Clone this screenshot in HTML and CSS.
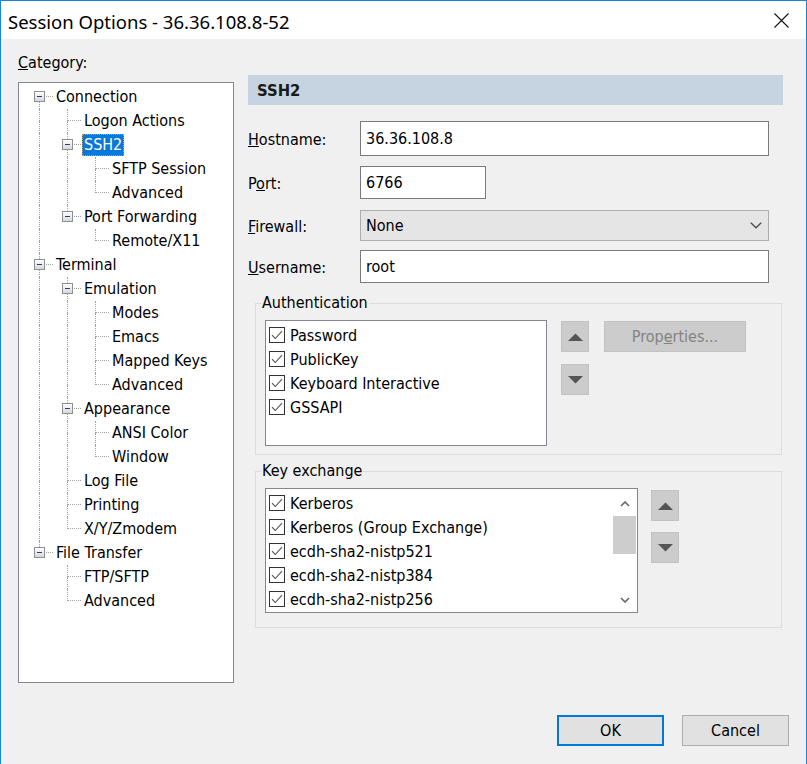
FILE: index.html
```html
<!DOCTYPE html>
<html lang="en">
<head>
<meta charset="utf-8">
<title>Session Options</title>
<link rel="stylesheet" href="styles.css">
</head>
<body>
<div class="window">
  <div class="titlebar">
    <span class="title">Session Options - 36.36.108.8-52</span>
    <svg class="close" width="15" height="15" viewBox="0 0 15 15"><path d="M0.5 0.5L14.5 14.5M14.5 0.5L0.5 14.5" stroke="#111" stroke-width="1.1" fill="none"/></svg>
  </div>
  <div class="main">
    <div class="left">
      <div class="cat-label"><u>C</u>ategory:</div>
      <div class="tree">
        <div class="row"><span class="cell first"><span class="ln"></span><span class="box"></span></span><span class="lbl">Connection</span></div>
        <div class="row"><span class="cell pipe"><span class="ln"></span></span><span class="cell tee"><span class="ln"></span></span><span class="lbl">Logon Actions</span></div>
        <div class="row"><span class="cell pipe"><span class="ln"></span></span><span class="cell tee"><span class="ln"></span><span class="box"></span></span><span class="lbl sel">SSH2</span></div>
        <div class="row"><span class="cell pipe"><span class="ln"></span></span><span class="cell pipe"><span class="ln"></span></span><span class="cell tee"><span class="ln"></span></span><span class="lbl">SFTP Session</span></div>
        <div class="row"><span class="cell pipe"><span class="ln"></span></span><span class="cell pipe"><span class="ln"></span></span><span class="cell elbow"><span class="ln"></span></span><span class="lbl">Advanced</span></div>
        <div class="row"><span class="cell pipe"><span class="ln"></span></span><span class="cell elbow"><span class="ln"></span><span class="box"></span></span><span class="lbl">Port Forwarding</span></div>
        <div class="row"><span class="cell pipe"><span class="ln"></span></span><span class="cell blank"></span><span class="cell elbow"><span class="ln"></span></span><span class="lbl">Remote/X11</span></div>
        <div class="row"><span class="cell tee"><span class="ln"></span><span class="box"></span></span><span class="lbl">Terminal</span></div>
        <div class="row"><span class="cell pipe"><span class="ln"></span></span><span class="cell tee"><span class="ln"></span><span class="box"></span></span><span class="lbl">Emulation</span></div>
        <div class="row"><span class="cell pipe"><span class="ln"></span></span><span class="cell pipe"><span class="ln"></span></span><span class="cell tee"><span class="ln"></span></span><span class="lbl">Modes</span></div>
        <div class="row"><span class="cell pipe"><span class="ln"></span></span><span class="cell pipe"><span class="ln"></span></span><span class="cell tee"><span class="ln"></span></span><span class="lbl">Emacs</span></div>
        <div class="row"><span class="cell pipe"><span class="ln"></span></span><span class="cell pipe"><span class="ln"></span></span><span class="cell tee"><span class="ln"></span></span><span class="lbl">Mapped Keys</span></div>
        <div class="row"><span class="cell pipe"><span class="ln"></span></span><span class="cell pipe"><span class="ln"></span></span><span class="cell elbow"><span class="ln"></span></span><span class="lbl">Advanced</span></div>
        <div class="row"><span class="cell pipe"><span class="ln"></span></span><span class="cell tee"><span class="ln"></span><span class="box"></span></span><span class="lbl">Appearance</span></div>
        <div class="row"><span class="cell pipe"><span class="ln"></span></span><span class="cell pipe"><span class="ln"></span></span><span class="cell tee"><span class="ln"></span></span><span class="lbl">ANSI Color</span></div>
        <div class="row"><span class="cell pipe"><span class="ln"></span></span><span class="cell pipe"><span class="ln"></span></span><span class="cell elbow"><span class="ln"></span></span><span class="lbl">Window</span></div>
        <div class="row"><span class="cell pipe"><span class="ln"></span></span><span class="cell tee"><span class="ln"></span></span><span class="lbl">Log File</span></div>
        <div class="row"><span class="cell pipe"><span class="ln"></span></span><span class="cell tee"><span class="ln"></span></span><span class="lbl">Printing</span></div>
        <div class="row"><span class="cell pipe"><span class="ln"></span></span><span class="cell elbow"><span class="ln"></span></span><span class="lbl">X/Y/Zmodem</span></div>
        <div class="row"><span class="cell elbow"><span class="ln"></span><span class="box"></span></span><span class="lbl">File Transfer</span></div>
        <div class="row"><span class="cell blank"></span><span class="cell tee"><span class="ln"></span></span><span class="lbl">FTP/SFTP</span></div>
        <div class="row"><span class="cell blank"></span><span class="cell elbow"><span class="ln"></span></span><span class="lbl">Advanced</span></div>
      </div>
    </div>

    <div class="right">
      <div class="header">SSH2</div>
      <div class="frow host"><label><u>H</u>ostname:</label><div class="field">36.36.108.8</div></div>
      <div class="frow port"><label>P<u>o</u>rt:</label><div class="field">6766</div></div>
      <div class="frow fw"><label><u>F</u>irewall:</label><div class="field select"><span>None</span><svg width="12" height="7" viewBox="0 0 12 7"><path d="M0.8 0.8L6 5.8L11.2 0.8" stroke="#505050" stroke-width="1.4" fill="none"/></svg></div></div>
      <div class="frow user"><label><u>U</u>sername:</label><div class="field">root</div></div>

      <fieldset class="group auth">
        <legend>Authentication</legend>
        <div class="gbody">
          <div class="list">
            <div class="item"><svg class="cb" width="16" height="16" viewBox="0 0 16 16"><rect x="0.5" y="0.5" width="15" height="15" fill="#fff" stroke="#333"/><path d="M3 8.2L6.3 11.5L13 4.2" stroke="#555" stroke-width="1.1" fill="none"/></svg><span>Password</span></div>
            <div class="item"><svg class="cb" width="16" height="16" viewBox="0 0 16 16"><rect x="0.5" y="0.5" width="15" height="15" fill="#fff" stroke="#333"/><path d="M3 8.2L6.3 11.5L13 4.2" stroke="#555" stroke-width="1.1" fill="none"/></svg><span>PublicKey</span></div>
            <div class="item"><svg class="cb" width="16" height="16" viewBox="0 0 16 16"><rect x="0.5" y="0.5" width="15" height="15" fill="#fff" stroke="#333"/><path d="M3 8.2L6.3 11.5L13 4.2" stroke="#555" stroke-width="1.1" fill="none"/></svg><span>Keyboard Interactive</span></div>
            <div class="item"><svg class="cb" width="16" height="16" viewBox="0 0 16 16"><rect x="0.5" y="0.5" width="15" height="15" fill="#fff" stroke="#333"/><path d="M3 8.2L6.3 11.5L13 4.2" stroke="#555" stroke-width="1.1" fill="none"/></svg><span>GSSAPI</span></div>
          </div>
          <div class="arrows">
            <div class="abtn"><svg width="15" height="8" viewBox="0 0 15 8"><path d="M0 8L7.5 0.5L15 8Z" fill="#555"/></svg></div>
            <div class="abtn"><svg width="15" height="8" viewBox="0 0 15 8"><path d="M0 0L15 0L7.5 7.5Z" fill="#555"/></svg></div>
          </div>
          <div class="props">Prop<u>e</u>rties...</div>
        </div>
      </fieldset>

      <fieldset class="group kex">
        <legend>Key exchange</legend>
        <div class="gbody">
          <div class="list">
            <div class="items">
              <div class="item"><svg class="cb" width="16" height="16" viewBox="0 0 16 16"><rect x="0.5" y="0.5" width="15" height="15" fill="#fff" stroke="#333"/><path d="M3 8.2L6.3 11.5L13 4.2" stroke="#555" stroke-width="1.1" fill="none"/></svg><span>Kerberos</span></div>
              <div class="item"><svg class="cb" width="16" height="16" viewBox="0 0 16 16"><rect x="0.5" y="0.5" width="15" height="15" fill="#fff" stroke="#333"/><path d="M3 8.2L6.3 11.5L13 4.2" stroke="#555" stroke-width="1.1" fill="none"/></svg><span>Kerberos (Group Exchange)</span></div>
              <div class="item"><svg class="cb" width="16" height="16" viewBox="0 0 16 16"><rect x="0.5" y="0.5" width="15" height="15" fill="#fff" stroke="#333"/><path d="M3 8.2L6.3 11.5L13 4.2" stroke="#555" stroke-width="1.1" fill="none"/></svg><span>ecdh-sha2-nistp521</span></div>
              <div class="item"><svg class="cb" width="16" height="16" viewBox="0 0 16 16"><rect x="0.5" y="0.5" width="15" height="15" fill="#fff" stroke="#333"/><path d="M3 8.2L6.3 11.5L13 4.2" stroke="#555" stroke-width="1.1" fill="none"/></svg><span>ecdh-sha2-nistp384</span></div>
              <div class="item"><svg class="cb" width="16" height="16" viewBox="0 0 16 16"><rect x="0.5" y="0.5" width="15" height="15" fill="#fff" stroke="#333"/><path d="M3 8.2L6.3 11.5L13 4.2" stroke="#555" stroke-width="1.1" fill="none"/></svg><span>ecdh-sha2-nistp256</span></div>
            </div>
            <div class="scroll">
              <div class="sarrow"><svg width="10" height="6" viewBox="0 0 10 6"><path d="M1 5L5 1L9 5" stroke="#606060" stroke-width="1.5" fill="none"/></svg></div>
              <div class="thumb"></div>
              <div class="track"></div>
              <div class="sarrow"><svg width="10" height="6" viewBox="0 0 10 6"><path d="M1 1L5 5L9 1" stroke="#606060" stroke-width="1.5" fill="none"/></svg></div>
            </div>
          </div>
          <div class="arrows">
            <div class="abtn"><svg width="15" height="8" viewBox="0 0 15 8"><path d="M0 8L7.5 0.5L15 8Z" fill="#555"/></svg></div>
            <div class="abtn"><svg width="15" height="8" viewBox="0 0 15 8"><path d="M0 0L15 0L7.5 7.5Z" fill="#555"/></svg></div>
          </div>
        </div>
      </fieldset>
    </div>
  </div>
  <div class="footer">
    <button class="btn ok">OK</button>
    <button class="btn">Cancel</button>
  </div>
</div>
</body>
</html>
```

FILE: styles.css
```css
html, body {
  margin: 0;
  padding: 0;
  background: #f0f0f0;
}
body {
  font-family: "DejaVu Sans Condensed", "DejaVu Sans", sans-serif;
  font-stretch: condensed;
  font-size: 16px;
  color: #000;
}
.window {
  width: 807px;
  height: 764px;
  box-sizing: border-box;
  border: 1px solid #1883d7;
  border-bottom: none;
  background: #f0f0f0;
}
.titlebar {
  height: 38px;
  box-sizing: border-box;
  background: #fff;
  display: flex;
  align-items: center;
  justify-content: space-between;
  padding: 1px 17px 0 7px;
}
.title {
  font-family: "Noto Sans", sans-serif;
  font-stretch: normal;
  font-size: 18.5px;
  color: #000;
  padding-top: 2px;
}
.close { display: block; }

.main {
  display: flex;
  gap: 14px;
  padding: 13px 0 0 17px;
}
.left {
  display: flex;
  flex-direction: column;
}
.cat-label {
  line-height: 20px;
  height: 20px;
  margin-top: 1px;
  margin-bottom: 9px;
}
.tree {
  width: 216px;
  height: 601px;
  box-sizing: border-box;
  border: 1px solid #828790;
  background: #fff;
  padding: 2px 0 0 6px;
}
.row {
  display: flex;
  align-items: center;
  height: 24px;
}
.cell {
  width: 28px;
  height: 24px;
  flex: none;
  display: grid;
}
.cell > .ln, .cell > .box { grid-area: 1 / 1; }
.ln {
  display: flex;
  flex-direction: column;
}
.ln::before, .ln::after {
  content: "";
  display: block;
  height: 12px;
  width: 14px;
  margin-left: 14px;
  box-sizing: border-box;
}
.pipe .ln::before, .tee .ln::before, .elbow .ln::before { border-left: 1px dotted #a0a0a0; }
.tee .ln::before, .elbow .ln::before, .first .ln::before { border-bottom: 1px dotted #a0a0a0; }
.pipe .ln::after, .tee .ln::after, .first .ln::after { border-left: 1px dotted #a0a0a0; }
.box {
  width: 11px;
  height: 11px;
  box-sizing: border-box;
  margin: 6px 0 0 9px;
  align-self: start;
  justify-self: start;
  border: 1px solid #8e8f8f;
  background: linear-gradient(#ffffff, #d7d7d7);
  display: flex;
  align-items: center;
  justify-content: center;
}
.box::after {
  content: "";
  width: 5px;
  height: 1px;
  background: #2f3f5f;
}
.lbl {
  margin-left: 1px;
  padding: 0 1px;
  border: 1px dotted transparent;
  line-height: 20px;
  white-space: nowrap;
}
.lbl.sel {
  background: #0a78d8;
  color: #fff;
  border-color: #e09a3a;
}

.right {
  width: 535px;
  display: flex;
  flex-direction: column;
}
.header {
  margin-top: 23px;
  height: 30px;
  line-height: 31px;
  background: #c6d4e1;
  font-weight: bold;
  font-size: 16.5px;
  padding-left: 9px;
  color: #1a1a1a;
}
.frow {
  display: flex;
  align-items: center;
}
.frow label { width: 112px; flex: none; padding-top: 1px; }
.field {
  box-sizing: border-box;
  border: 1px solid #7a7a7a;
  background: #fff;
  padding-left: 5px;
  display: flex;
  align-items: center;
  width: 409px;
}
.host { margin-top: 16px; }
.host .field { height: 35px; }
.port { margin-top: 10px; }
.port .field { width: 126px; height: 33px; }
.fw { margin-top: 11px; }
.fw .field {
  height: 31px;
  background: #e5e5e5;
  border-color: #adadad;
  justify-content: space-between;
  padding-right: 6px;
}
.user { margin-top: 9px; }
.user .field { height: 33px; }

.group {
  margin: 10px 1px 0 7px;
  border: 1px solid #dcdcdc;
  padding: 7px 0 8px 9px;
  min-width: 0;
}
.group legend {
  margin-left: -4px;
  padding: 0 1px;
  line-height: 20px;
}
.gbody {
  display: flex;
  align-items: flex-start;
}
.list {
  box-sizing: border-box;
  border: 1px solid #828790;
  background: #fff;
}
.auth .list {
  width: 282px;
  height: 126px;
  padding-top: 2px;
}
.item {
  display: flex;
  align-items: center;
  height: 24px;
  padding-left: 3px;
  gap: 5px;
  white-space: nowrap;
}
.cb { display: block; flex: none; }
.arrows {
  display: flex;
  flex-direction: column;
  gap: 12px;
  margin: 1px 0 0 14px;
}
.abtn {
  width: 28px;
  height: 31px;
  box-sizing: border-box;
  background: #cccccc;
  border: 1px solid #c2c2c2;
  display: flex;
  align-items: center;
  justify-content: center;
}
.props {
  margin: 1px 0 0 15px;
  width: 142px;
  height: 31px;
  box-sizing: border-box;
  background: #cccccc;
  border: 1px solid #c2c2c2;
  color: #838383;
  display: flex;
  align-items: center;
  justify-content: center;
}
.kex {
  margin-top: 6px;
  padding-bottom: 14px;
}
.kex .list {
  width: 373px;
  height: 125px;
  display: flex;
}
.kex .items {
  flex: 1;
  padding-top: 2px;
}
.kex .arrows {
  gap: 11px;
  margin: 2px 0 0 13px;
}
.scroll {
  width: 25px;
  display: flex;
  flex-direction: column;
  background: #fff;
}
.sarrow {
  height: 27px;
  display: flex;
  align-items: center;
  justify-content: center;
  flex: none;
  padding-top: 3px;
  box-sizing: border-box;
}
.sarrow:last-child { padding-top: 0; height: 24px; }
.thumb {
  height: 38px;
  margin: 0 1px;
  background: #cdcdcd;
  flex: none;
}
.track { flex: 1; }

.footer {
  display: flex;
  justify-content: flex-end;
  gap: 18px;
  padding-right: 17px;
  margin-top: 32px;
}
.btn {
  width: 107px;
  height: 31px;
  box-sizing: border-box;
  background: #e1e1e1;
  border: 1px solid #adadad;
  font: inherit;
  color: #000;
  padding: 0;
}
.btn.ok { border: 2px solid #0078d7; }
```
